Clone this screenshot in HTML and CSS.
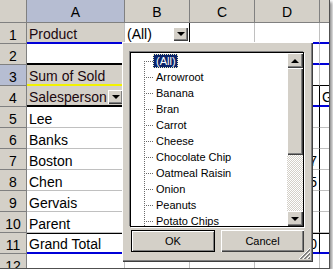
FILE: index.html
```html
<!DOCTYPE html>
<html lang="en">

<head>
    <meta charset="UTF-8">
    <title>Pivot Table Page Field</title>
    <link rel="stylesheet" href="styles.css">
</head>

<body>
    <div class="screen">
        <div class="sheet">
            <div class="corner"></div>
            <div class="col-head sel">A</div>
            <div class="col-head">B</div>
            <div class="col-head">C</div>
            <div class="col-head">D</div>
            <div class="col-head last"></div>

            <div class="row-head">1</div>
            <div class="cell field bb-blue">Product</div>
            <div class="cell bb-blue br-black">(All)<span class="drop"></span></div>
            <div class="cell bb-blue"></div>
            <div class="cell bb-blue"></div>
            <div class="cell bb-blue last"></div>

            <div class="row-head">2</div>
            <div class="cell bb-black"></div>
            <div class="cell bb-blue"></div>
            <div class="cell bb-blue"></div>
            <div class="cell bb-blue"></div>
            <div class="cell bb-blue last"></div>

            <div class="row-head sel">3</div>
            <div class="cell field bb-yellow">Sum of Sold</div>
            <div class="cell bb-thin">Product</div>
            <div class="cell bb-thin"></div>
            <div class="cell bb-thin"></div>
            <div class="cell bb-thin last"></div>

            <div class="row-head">4</div>
            <div class="cell field bb-black">Salesperson<span class="drop"></span></div>
            <div class="cell bb-blue"></div>
            <div class="cell bb-blue"></div>
            <div class="cell bb-blue br-black"></div>
            <div class="cell bb-blue last">Grand Total</div>

            <div class="row-head">5</div>
            <div class="cell name">Lee</div>
            <div class="cell"></div>
            <div class="cell"></div>
            <div class="cell num br-black"></div>
            <div class="cell last"></div>

            <div class="row-head">6</div>
            <div class="cell name">Banks</div>
            <div class="cell"></div>
            <div class="cell"></div>
            <div class="cell num br-black"></div>
            <div class="cell last"></div>

            <div class="row-head">7</div>
            <div class="cell name">Boston</div>
            <div class="cell"></div>
            <div class="cell"></div>
            <div class="cell num br-black">217</div>
            <div class="cell last"></div>

            <div class="row-head">8</div>
            <div class="cell name">Chen</div>
            <div class="cell"></div>
            <div class="cell"></div>
            <div class="cell num br-black">105</div>
            <div class="cell last"></div>

            <div class="row-head">9</div>
            <div class="cell name">Gervais</div>
            <div class="cell"></div>
            <div class="cell"></div>
            <div class="cell num br-black"></div>
            <div class="cell last"></div>

            <div class="row-head">10</div>
            <div class="cell name">Parent</div>
            <div class="cell"></div>
            <div class="cell"></div>
            <div class="cell num br-black"></div>
            <div class="cell last"></div>

            <div class="row-head">11</div>
            <div class="cell name total">Grand Total</div>
            <div class="cell total"></div>
            <div class="cell total"></div>
            <div class="cell num total br-black">1,250</div>
            <div class="cell total last"></div>

            <div class="row-head">12</div>
            <div class="cell"></div>
            <div class="cell"></div>
            <div class="cell"></div>
            <div class="cell"></div>
            <div class="cell last"></div>
        </div>

        <div class="popup">
            <div class="listbox">
                <ul class="items">
                    <li class="first"><span class="twig"></span><span class="label chosen">(All)</span></li>
                    <li><span class="twig"></span><span class="label">Arrowroot</span></li>
                    <li><span class="twig"></span><span class="label">Banana</span></li>
                    <li><span class="twig"></span><span class="label">Bran</span></li>
                    <li><span class="twig"></span><span class="label">Carrot</span></li>
                    <li><span class="twig"></span><span class="label">Cheese</span></li>
                    <li><span class="twig"></span><span class="label">Chocolate Chip</span></li>
                    <li><span class="twig"></span><span class="label">Oatmeal Raisin</span></li>
                    <li><span class="twig"></span><span class="label">Onion</span></li>
                    <li><span class="twig"></span><span class="label">Peanuts</span></li>
                    <li><span class="twig"></span><span class="label">Potato Chips</span></li>
                    <li><span class="twig"></span><span class="label">Pretzels</span></li>
                </ul>
                <div class="scrollbar">
                    <div class="sb-btn up"></div>
                    <div class="sb-thumb"></div>
                    <div class="sb-track"></div>
                    <div class="sb-btn down"></div>
                </div>
            </div>
            <div class="buttons">
                <button class="btn default">OK</button>
                <button class="btn">Cancel</button>
            </div>
            <svg class="grip" width="12" height="12" viewBox="0 0 12 12">
                <path d="M11 1 L1 11 M11 5 L5 11 M11 9 L9 11" stroke="#808080" stroke-width="1"/>
                <path d="M11 2 L2 11 M11 6 L6 11 M11 10 L10 11" stroke="#808080" stroke-width="1"/>
                <path d="M11 0 L0 11 M11 4 L4 11 M11 8 L8 11" stroke="#ffffff" stroke-width="1"/>
            </svg>
        </div>
    </div>
</body>

</html>
```

FILE: styles.css
```css
body {
    margin: 0;
    background-color: #ffffff;
    font-family: "Liberation Sans", Arial, sans-serif;
}

.screen {
    position: relative;
    width: 329px;
    height: 268px;
    overflow: hidden;
    border-right: 1px solid #505050;
    border-bottom: 1px solid #505050;
    box-shadow: 2px 2px 3px rgba(0, 0, 0, 0.45);
}

/* worksheet */

.sheet {
    display: grid;
    grid-template-columns: 27px 98px 65px 65px 65px 9px;
    grid-template-rows: 23px repeat(12, 21px);
    font-size: 14px;
    line-height: 16px;
}

.corner,
.col-head,
.row-head {
    background-color: #d4d0c8;
    border-right: 1px solid #808080;
    border-bottom: 1px solid #808080;
    box-sizing: border-box;
    color: #000;
    display: flex;
    justify-content: center;
    align-items: flex-end;
}

.col-head {
    padding-bottom: 2px;
}

.col-head.last {
    border-right: none;
}

.sel {
    background-color: #b6bdd2;
}

.cell {
    box-sizing: border-box;
    border-right: 1px solid #c0c0c0;
    border-bottom: 1px solid #c0c0c0;
    padding-left: 2px;
    display: flex;
    align-items: flex-end;
    white-space: nowrap;
    overflow: hidden;
    color: #000;
}

.cell.last {
    border-right: none;
}

.field {
    background-color: #d4d0c8;
    color: #1c0810;
}

.name {
    border-right-color: #808080;
}

.num {
    justify-content: flex-end;
    padding-right: 2px;
}

.bb-blue {
    border-bottom: 2px solid #0000d8;
}

.bb-black {
    border-bottom: 2px solid #000;
}

.bb-yellow {
    border-bottom: 2px solid #f2f200;
}

.bb-thin {
    border-bottom: 1px solid #000;
}

.br-black {
    border-right: 1px solid #000;
}

.total {
    border-top: 1px solid #000;
    border-bottom: 2px solid #0000d8;
}

.drop {
    margin-left: auto;
    margin-right: 1px;
    margin-bottom: 1px;
    width: 15px;
    height: 14px;
    flex-shrink: 0;
    background-color: #d4d0c8;
    box-shadow: inset 1px 1px #ffffff, inset -1px -1px #404040, inset -2px -2px #808080;
    display: flex;
    justify-content: center;
    align-items: center;
}

.drop::after {
    content: "";
    border-left: 4px solid transparent;
    border-right: 4px solid transparent;
    border-top: 4px solid #000;
}

/* page field dropdown */

.popup {
    position: absolute;
    left: 122px;
    top: 42px;
    width: 191px;
    height: 220px;
    box-sizing: border-box;
    padding: 10px 0 0 8px;
    background-color: #d4d0c8;
    box-shadow: inset 1px 1px #ffffff, inset -1px -1px #404040, inset -2px -2px #808080;
    font-size: 11px;
    color: #000;
}

.listbox {
    width: 174px;
    height: 175px;
    box-sizing: border-box;
    border: 1px solid #000;
    box-shadow: -1px -1px 0 #808080, 1px 1px 0 #ffffff;
    background-color: #ffffff;
    display: flex;
}

.items {
    flex: 1;
    margin: 0;
    padding: 0;
    list-style: none;
    overflow: hidden;
}

.items li {
    height: 16px;
    display: flex;
    align-items: center;
}

.twig {
    width: 22px;
    height: 16px;
    flex-shrink: 0;
    background:
        repeating-linear-gradient(to right, #6a6a6a 0 1px, transparent 1px 2px) 13px 8px / 9px 1px no-repeat,
        repeating-linear-gradient(to bottom, #6a6a6a 0 1px, transparent 1px 2px) 13px 0 / 1px 16px no-repeat;
}

.first .twig {
    background:
        repeating-linear-gradient(to right, #6a6a6a 0 1px, transparent 1px 2px) 13px 8px / 9px 1px no-repeat,
        repeating-linear-gradient(to bottom, #6a6a6a 0 1px, transparent 1px 2px) 13px 8px / 1px 8px no-repeat;
}

.label {
    padding: 0 2px 0 3px;
    line-height: 14px;
    white-space: nowrap;
}

.chosen {
    background-color: #0a246a;
    color: #ffffff;
    outline: 1px dotted #f0f0c0;
    outline-offset: -1px;
}

.scrollbar {
    width: 16px;
    display: flex;
    flex-direction: column;
}

.sb-btn,
.sb-thumb {
    background-color: #d4d0c8;
    box-shadow: inset 1px 1px #ffffff, inset -1px -1px #404040, inset -2px -2px #808080;
}

.sb-btn {
    height: 15px;
    display: flex;
    justify-content: center;
    align-items: center;
}

.sb-btn::after {
    content: "";
    border-left: 4px solid transparent;
    border-right: 4px solid transparent;
}

.sb-btn.up::after {
    border-bottom: 4px solid #000;
}

.sb-btn.down::after {
    border-top: 4px solid #000;
}

.sb-thumb {
    height: 87px;
}

.sb-track {
    flex: 1;
    background: repeating-conic-gradient(#d4d0c8 0 25%, #ffffff 0 50%) 0 0 / 2px 2px;
}

.buttons {
    display: flex;
    gap: 6px;
    margin-top: 3px;
    padding-left: 1px;
}

.btn {
    height: 22px;
    width: 83px;
    padding: 0;
    border: none;
    background-color: #d4d0c8;
    font-family: "Liberation Sans", Arial, sans-serif;
    font-size: 11px;
    line-height: 20px;
    color: #000;
    box-shadow: inset 1px 1px #ffffff, inset -1px -1px #404040, inset -2px -2px #808080;
}

.btn.default {
    width: 84px;
    border: 1px solid #000;
    box-shadow: inset 1px 1px #ffffff, inset -1px -1px #808080;
}

.grip {
    position: absolute;
    right: 2px;
    bottom: 2px;
}
```
